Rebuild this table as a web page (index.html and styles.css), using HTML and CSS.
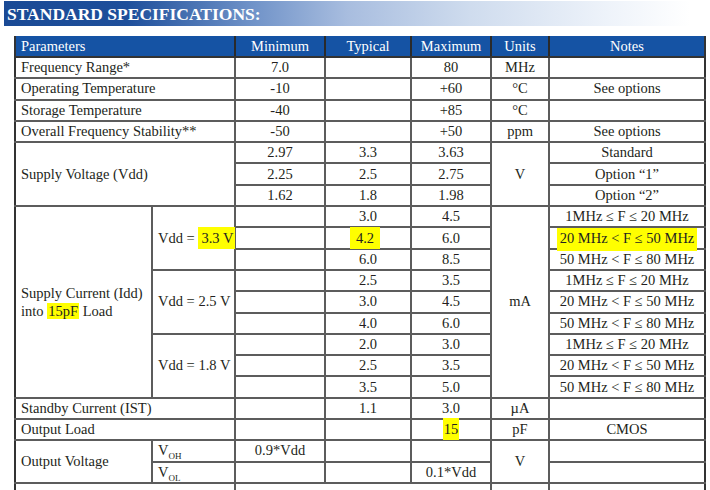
FILE: index.html
```html
<!doctype html>
<html lang="en">
<head>
  <meta charset="utf-8">
  <title>Standard Specifications</title>
  <link rel="stylesheet" href="styles.css">
</head>
<body>
<div class="banner">STANDARD SPECIFICATIONS:</div>
<table class="spec">
  <colgroup>
    <col class="c-p1"><col class="c-p2"><col class="c-min"><col class="c-typ"><col class="c-max"><col class="c-unit"><col class="c-note">
  </colgroup>
  <thead>
    <tr>
      <th colspan="2" class="left">Parameters</th>
      <th>Minimum</th>
      <th>Typical</th>
      <th>Maximum</th>
      <th>Units</th>
      <th>Notes</th>
    </tr>
  </thead>
  <tbody>
    <tr><td colspan="2" class="left">Frequency Range*</td><td>7.0</td><td></td><td>80</td><td>MHz</td><td></td></tr>
    <tr><td colspan="2" class="left">Operating Temperature</td><td>-10</td><td></td><td>+60</td><td>°C</td><td>See options</td></tr>
    <tr><td colspan="2" class="left">Storage Temperature</td><td>-40</td><td></td><td>+85</td><td>°C</td><td></td></tr>
    <tr><td colspan="2" class="left">Overall Frequency Stability**</td><td>-50</td><td></td><td>+50</td><td>ppm</td><td>See options</td></tr>
    <!-- supply voltage -->
    <tr><td colspan="2" rowspan="3" class="left">Supply Voltage (Vdd)</td><td>2.97</td><td>3.3</td><td>3.63</td><td rowspan="3">V</td><td>Standard</td></tr>
    <tr><td>2.25</td><td>2.5</td><td>2.75</td><td>Option “1”</td></tr>
    <tr><td>1.62</td><td>1.8</td><td>1.98</td><td>Option “2”</td></tr>
    <!-- supply current -->
    <tr>
      <td rowspan="9" class="left">Supply Current (Idd)<br>into <span class="mark m-load">15pF</span> Load</td>
      <td rowspan="3" class="left">Vdd = <span class="mark m-vdd">3.3 V</span></td>
      <td></td><td>3.0</td><td>4.5</td><td rowspan="9">mA</td><td>1MHz ≤ F ≤ 20 MHz</td>
    </tr>
    <tr><td></td><td><span class="mark m-typ">4.2</span></td><td>6.0</td><td><span class="mark m-note">20 MHz &lt; F ≤ 50 MHz</span></td></tr>
    <tr><td></td><td>6.0</td><td>8.5</td><td>50 MHz &lt; F ≤ 80 MHz</td></tr>
    <tr><td rowspan="3" class="left">Vdd = 2.5 V</td><td></td><td>2.5</td><td>3.5</td><td>1MHz ≤ F ≤ 20 MHz</td></tr>
    <tr><td></td><td>3.0</td><td>4.5</td><td>20 MHz &lt; F ≤ 50 MHz</td></tr>
    <tr><td></td><td>4.0</td><td>6.0</td><td>50 MHz &lt; F ≤ 80 MHz</td></tr>
    <tr><td rowspan="3" class="left">Vdd = 1.8 V</td><td></td><td>2.0</td><td>3.0</td><td>1MHz ≤ F ≤ 20 MHz</td></tr>
    <tr><td></td><td>2.5</td><td>3.5</td><td>20 MHz &lt; F ≤ 50 MHz</td></tr>
    <tr><td></td><td>3.5</td><td>5.0</td><td>50 MHz &lt; F ≤ 80 MHz</td></tr>
    <!-- load / output -->
    <tr><td colspan="2" class="left">Standby Current (IST)</td><td></td><td>1.1</td><td>3.0</td><td>µA</td><td></td></tr>
    <tr><td colspan="2" class="left">Output Load</td><td></td><td></td><td><span class="mark m-max">15</span></td><td>pF</td><td>CMOS</td></tr>
    <tr><td rowspan="2" class="left">Output Voltage</td><td class="left sym">V<sub>OH</sub></td><td>0.9*Vdd</td><td></td><td></td><td rowspan="2">V</td><td></td></tr>
    <tr><td class="left sym">V<sub>OL</sub></td><td></td><td></td><td>0.1*Vdd</td><td></td></tr>
    <tr><td colspan="2" class="left"></td><td colspan="3"></td><td></td><td></td></tr>
  </tbody>
</table>
</body>
</html>
```

FILE: styles.css
```css
*{
  margin:0;
  padding:0;
}
body{
  font-family: "Liberation Serif", "DejaVu Serif", serif;
  color:#231f20;
  background:#fff;
  width:710px;
  height:490px;
  overflow:hidden;
}
.banner{
  margin: 1px 20px 0 4px;
  height: 25px;
  line-height: 26px;
  padding-left: 3px;
  font-size: 17.5px;
  font-weight: bold;
  color: #fff;
  background: linear-gradient(to right, #1a4a95 0%, #1e4f9b 18%, #6f92c8 36%, #a8bddf 50%, #cfdcee 68%, #eef3fa 88%, #fff 100%);
}
.spec{
  margin: 10px 0 0 14px;
  width: 690px;
  table-layout: fixed;
  border-collapse: collapse;
  font-size: 14.5px;
}
.c-p1{ width:137px; }
.c-p2{ width:83px; }
.c-min{ width:90px; }
.c-typ{ width:86px; }
.c-max{ width:80px; }
.c-unit{ width:58px; }
.c-note{ width:156px; }

.spec th{
  height: 20px;
  background: #1553a4;
  color: #fff;
  font-weight: normal;
  text-align: center;
  border-left: 2px solid #2a2a2a;
  border-bottom: 2px solid #333;
  padding: 0 4px;
  line-height: 18px;
}
.spec td{
  height: 19.3px;
  border: 2px solid #5c5c5c;
  text-align: center;
  vertical-align: middle;
  padding: 0 3px;
  line-height: 17px;
  white-space: nowrap;
}
.spec .left{
  text-align: left;
  padding-left: 5px;
}
.spec tr > :first-child{
  border-left: 2px solid #333;
}
.spec tr > :last-child{
  border-right: 2px solid #333;
}
.spec td[rowspan="9"].left{
  border-left: 2px solid #333;
  line-height: 18px;
}
.sym{
  vertical-align: top !important;
  line-height: 18px !important;
}
.sym sub{
  font-size: 9px;
  line-height: 0;
  vertical-align: -4px;
}
.mark{
  background: #ffff00;
}
.m-vdd{ padding: 3px 2px 3px 3px; }
.m-load{ padding: 0 1px; }
.m-typ{ padding: 3px 6px; margin-left: -6px; }
.m-note{ padding: 2px 3px 5px; }
.m-max{ padding: 3px 1px; }
```
